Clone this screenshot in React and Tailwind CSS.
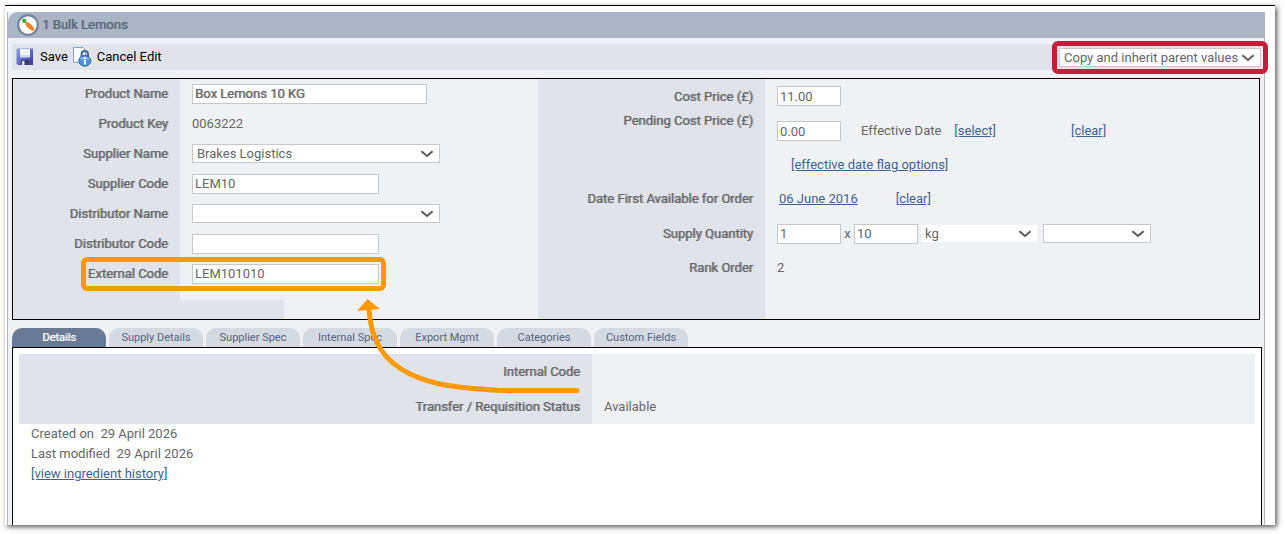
import React from 'react';
import clsx from 'clsx';

const TABS = [
  'Details',
  'Supply Details',
  'Supplier Spec',
  'Internal Spec',
  'Export Mgmt',
  'Categories',
  'Custom Fields',
];

function CarrotIcon() {
  return (
    <svg viewBox="0 0 22 22" className="h-[22px] w-[22px] shrink-0" aria-hidden="true">
      <circle cx="11" cy="11" r="9.8" fill="#fff" stroke="#74859b" strokeWidth="2.2" />
      <path d="M8.6 8.4 C9.6 7.2 12.4 8.8 14.4 10.8 C16.2 12.6 17.8 15.4 17 16.4 C16 17.4 12.8 15.8 10.8 13.8 C9 12 7.6 9.6 8.6 8.4 Z" fill="#f58220" />
      <circle cx="7.2" cy="6.8" r="2.2" fill="#4fa83c" />
    </svg>
  );
}

function SaveIcon() {
  return (
    <svg viewBox="0 0 18 18" className="h-[18px] w-[18px]" aria-hidden="true">
      <defs>
        <linearGradient id="disk" x1="0" y1="0" x2="1" y2="1">
          <stop offset="0" stopColor="#8f9ff0" />
          <stop offset="1" stopColor="#3434a4" />
        </linearGradient>
      </defs>
      <path d="M0.5 0.5 H17 V17 H2 L0.5 15.5 Z" fill="url(#disk)" />
      <path d="M4 1 H14 V9 H4 Z" fill="#eef3fb" />
      <path d="M4 7 H14 V9.5 H4 Z" fill="#c9dcf2" />
      <path d="M5 12 H13 V17 H5 Z" fill="#3a3a5c" />
      <path d="M6 13 H8.5 V17 H6 Z" fill="#dfe5ef" />
    </svg>
  );
}

function CancelIcon() {
  return (
    <svg viewBox="0 0 20 20" className="h-5 w-5" aria-hidden="true">
      <path d="M1.5 0.5 H11 L13.5 3 V15.5 H1.5 Z" fill="#f7fafe" stroke="#8fa3bd" />
      <path d="M9.6 10 V7.4 C9.6 3 16 3 16 7.4 V10" fill="none" stroke="#3d6a9c" strokeWidth="2" />
      <ellipse cx="12.8" cy="13.8" rx="6" ry="5.4" fill="#4f90d0" stroke="#2f659c" />
      <path d="M7.8 12 C9 9.4 16.6 9.4 17.8 12 C15 13 10.6 13 7.8 12 Z" fill="#8dbde8" />
      <path d="M11.9 10.4 H13.9 V12 H11.9 Z M11.9 13 H13.9 V17.4 H11.9 Z" fill="#fff" />
    </svg>
  );
}

function TextBox({ className, ...props }) {
  return (
    <input
      type="text"
      className={clsx('h-5 border border-[#c8c8c8] bg-white pl-0.5 outline-none', className)}
      {...props}
    />
  );
}

function Select({ className, bordered = true, options, ...props }) {
  return (
    <span className={clsx('relative block', className)}>
      <select
        className={clsx(
          'block h-[19px] w-full appearance-none bg-white pl-1 leading-[17px] outline-none',
          bordered ? 'border border-[#c8c8c8]' : 'border border-[#f0f1f5]'
        )}
        {...props}
      >
        {options.map((option) => (
          <option key={option}>{option}</option>
        ))}
      </select>
      <svg viewBox="0 0 14 8" className="pointer-events-none absolute top-1.5 right-1.5 h-2 w-3.5" aria-hidden="true">
        <path d="M1.4 1.2 L7 6 L12.6 1.2" fill="none" stroke="#5a5a5a" strokeWidth="2" />
      </svg>
    </span>
  );
}

function Label({ htmlFor, className, children }) {
  const Tag = htmlFor ? 'label' : 'span';
  return (
    <Tag htmlFor={htmlFor} className={clsx('shrink-0 bg-[#e0e3ea] pr-3 text-right [text-shadow:1px_0_0_#66666699]', className)}>
      {children}
    </Tag>
  );
}

function LeftRow({ label, htmlFor, children }) {
  return (
    <div className="flex h-[30px]">
      <Label htmlFor={htmlFor} className="w-[167px] leading-[30px]">{label}</Label>
      <div className="pt-[5px] pl-3 leading-5">{children}</div>
    </div>
  );
}

function RightRow({ label, htmlFor, className = 'leading-[35px]', children }) {
  return (
    <div className="flex">
      <Label htmlFor={htmlFor} className={clsx('w-[227px]', className)}>{label}</Label>
      <div className="pl-3">{children}</div>
    </div>
  );
}

function TextLink({ className, children }) {
  return (
    <a href="#" className={clsx('text-[#41648f] underline', className)}>
      {children}
    </a>
  );
}

function ProductForm() {
  return (
    <section className="mx-1 grid grid-cols-[525fr_721fr] border border-black">
      <div>
        <LeftRow label="Product Name" htmlFor="name">
          <TextBox id="name" defaultValue="Box Lemons 10 KG" className="block w-[235px] [text-shadow:1px_0_0_#66666699]" />
        </LeftRow>
        <LeftRow label="Product Key">0063222</LeftRow>
        <LeftRow label="Supplier Name" htmlFor="supplier">
          <Select id="supplier" options={['Brakes Logistics']} className="w-[248px]" />
        </LeftRow>
        <LeftRow label="Supplier Code" htmlFor="supplierCode">
          <TextBox id="supplierCode" defaultValue="LEM10" className="block w-[187px]" />
        </LeftRow>
        <LeftRow label="Distributor Name" htmlFor="distributor">
          <Select id="distributor" options={['']} className="w-[248px]" />
        </LeftRow>
        <LeftRow label="Distributor Code" htmlFor="distributorCode">
          <TextBox id="distributorCode" className="block w-[187px]" />
        </LeftRow>
        <div className="relative">
          <LeftRow label="External Code" htmlFor="externalCode">
            <TextBox id="externalCode" defaultValue="LEM101010" className="block w-[187px]" />
          </LeftRow>
          {/* highlight and arrow drawn over the form */}
          <div className="pointer-events-none absolute -top-0.5 left-[68px] h-[34px] w-[305px] rounded-md border-5 border-[#ff9900]" />
          <svg
            viewBox="0 0 230 100"
            className="pointer-events-none absolute top-[39px] left-[342px] z-10 h-[100px] w-[230px]"
            aria-hidden="true"
          >
            <path d="M14 11 C16 44 29 63 55 76 C80 88 105 90 145 92.5 H222" fill="none" stroke="#ff9900" strokeWidth="5" strokeLinecap="round" />
            <path d="M12.5 1 L25 11 L2 13 Z" fill="#ff9900" />
          </svg>
        </div>
        <div className="h-[11px] w-[167px] bg-[#e0e3ea]" />
        <div className="h-[19px] w-[271px] bg-[#e0e3ea]" />
      </div>

      <div className="flex flex-col">
        <RightRow label="Cost Price (£)" htmlFor="cost">
          <div className="flex h-[34px] items-center">
            <TextBox id="cost" defaultValue="11.00" className="w-16" />
          </div>
        </RightRow>
        <RightRow label="Pending Cost Price (£)" htmlFor="pending" className="leading-[14px]">
          <div className="flex h-[34px] items-center">
            <TextBox id="pending" defaultValue="0.00" className="w-16" />
            <span className="ml-5">Effective Date</span>
            <TextLink className="ml-[13px]">[select]</TextLink>
            <TextLink className="ml-[75px]">[clear]</TextLink>
          </div>
          <div className="flex h-[34px] items-center pl-3.5">
            <TextLink>[effective date flag options]</TextLink>
          </div>
        </RightRow>
        <RightRow label="Date First Available for Order" className="leading-[34px]">
          <div className="flex h-[34px] items-center pl-0.5">
            <TextLink>06 June 2016</TextLink>
            <TextLink className="ml-[38px]">[clear]</TextLink>
          </div>
        </RightRow>
        <RightRow label="Supply Quantity" htmlFor="qty">
          <div className="flex h-[35px] items-center">
            <TextBox id="qty" defaultValue="1" className="w-16" />
            <span className="w-[13px] text-center">x</span>
            <TextBox aria-label="Unit size" defaultValue="10" className="w-16" />
            <Select aria-label="Unit" options={['kg']} bordered={false} className="ml-0.5 w-[118px]" />
            <Select aria-label="Pack type" options={['']} className="ml-[5px] w-[108px]" />
          </div>
        </RightRow>
        <RightRow label="Rank Order" className="leading-[34px]">
          <span className="leading-[34px]">2</span>
        </RightRow>
        <div className="w-[227px] flex-1 bg-[#e0e3ea]" />
      </div>
    </section>
  );
}

function Tabs() {
  return (
    <nav className="mt-2 ml-1 flex gap-[3px] text-[11px]" role="tablist">
      {TABS.map((tab, i) => (
        <button
          key={tab}
          type="button"
          role="tab"
          aria-selected={i === 0}
          className={clsx(
            'h-[19px] w-[94px] rounded-t-[10px] leading-[19px] whitespace-nowrap',
            i === 0 ? 'bg-[#687a95] text-white [text-shadow:1px_0_0_#ffffff99]' : 'bg-[#d5d9e1] text-[#54657e]'
          )}
        >
          {tab}
        </button>
      ))}
    </nav>
  );
}

function Details() {
  return (
    <section className="mr-0.5 ml-1 border border-b-0 border-black bg-white px-1.5 pt-1.5 pb-[41px]">
      <table className="w-full bg-[#f0f1f5]">
        <tbody>
          <tr className="h-[35px]">
            <th className="w-[573px] bg-[#e0e3ea] pr-3 text-right font-normal [text-shadow:1px_0_0_#66666699]">Internal Code</th>
            <td className="pl-3" />
          </tr>
          <tr className="h-[35px]">
            <th className="bg-[#e0e3ea] pr-3 text-right font-normal [text-shadow:1px_0_0_#66666699]">Transfer / Requisition Status</th>
            <td className="pl-3">Available</td>
          </tr>
        </tbody>
      </table>
      <div className="pl-3 leading-5">
        <p className="whitespace-pre">Created on  29 April 2026</p>
        <p className="whitespace-pre">Last modified  29 April 2026</p>
        <TextLink>[view ingredient history]</TextLink>
      </div>
    </section>
  );
}

export default function App() {
  return (
    <div className="bg-white pt-[5px] pr-2.5 pb-[9px] pl-[5px] font-['Roboto','Liberation_Sans',sans-serif] text-[13px] text-[#666]">
      <main className="border-t border-black bg-white pt-1.5 pr-2.5 pl-0.5 shadow-[2px_2px_5px_rgba(0,0,0,0.65)]">
        <div className="border-x border-[#abb5c5] bg-[#f0f1f5]">
          <header className="flex h-[26px] items-center gap-[3px] rounded-tl-[10px] bg-[#abb5c5] pl-[9px]">
            <CarrotIcon />
            <h1 className="text-[#55657c] [text-shadow:1px_0_0_#55657c99]">1 Bulk Lemons</h1>
          </header>

          <div className="mt-1.5 mr-[3px] mb-2 ml-1 flex h-[26px] items-center bg-[#e0e3ea] pl-1 text-black">
            <button type="button" className="flex items-center gap-1.5">
              <SaveIcon />
              Save
            </button>
            <button type="button" className="ml-1 flex items-center gap-[5px]">
              <CancelIcon />
              Cancel Edit
            </button>
            <div className="relative ml-auto text-[#666]">
              <Select aria-label="Parent values" options={['Copy and inherit parent values']} className="w-[202px]" />
              <div className="pointer-events-none absolute -inset-[7px] rounded-md border-5 border-[#c41e3a]" />
            </div>
          </div>

          <ProductForm />
          <Tabs />
          <Details />
        </div>
      </main>
    </div>
  );
}
